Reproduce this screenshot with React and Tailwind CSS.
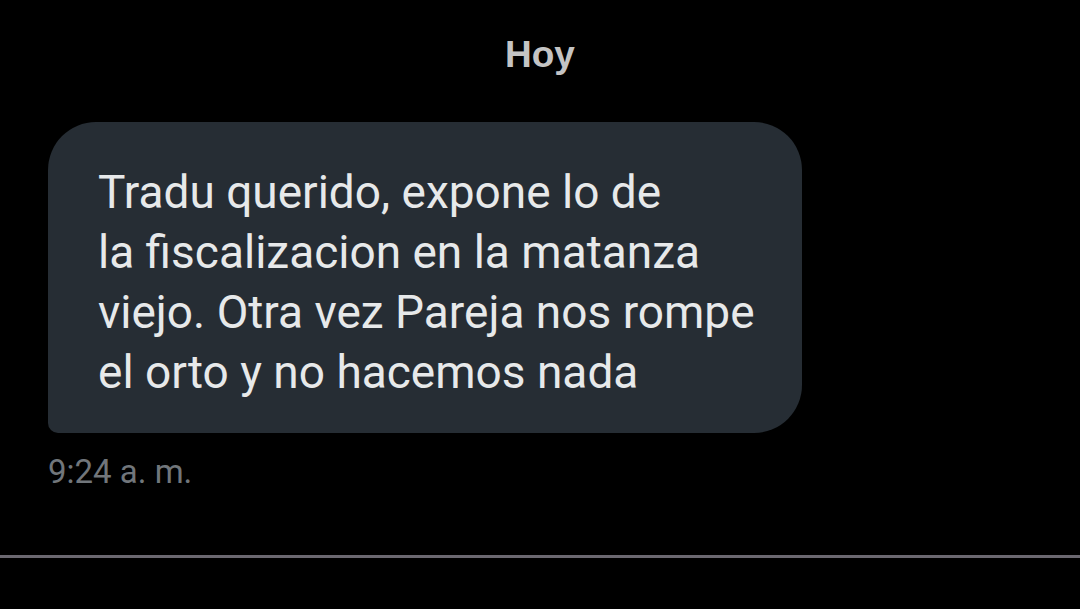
export default function App() {
  const lines = [
    "Tradu querido, expone lo de",
    "la fiscalizacion en la matanza",
    "viejo. Otra vez Pareja nos rompe",
    "el orto y no hacemos nada",
  ];
  return (
    <div className="w-[1080px] h-[609px] bg-black overflow-hidden" style={{ fontFamily: "Roboto, 'Noto Sans', sans-serif" }}>
      <div className="pt-[34px] text-center text-[37px] leading-[42px] font-bold text-[#c4c4c4] font-['Liberation_Sans',Arial,sans-serif]">Hoy</div>
      <div className="pl-[48px] mt-[46px]">
        <div className="w-[754px] h-[311px] bg-[#262d34] rounded-[48px] rounded-bl-[10px] pl-[50px] pt-[40px]">
          {lines.map((l) => (
            <div key={l} className="text-[46px] leading-[60px] text-[#e7e9ea]">{l}</div>
          ))}
        </div>
        <div className="mt-[19px] text-[33px] leading-[40px] text-[#71767b]">9:24 a. m.</div>
      </div>
      <div className="mt-[63px] h-[3px] bg-[#6b6870]" />
    </div>
  );
}
